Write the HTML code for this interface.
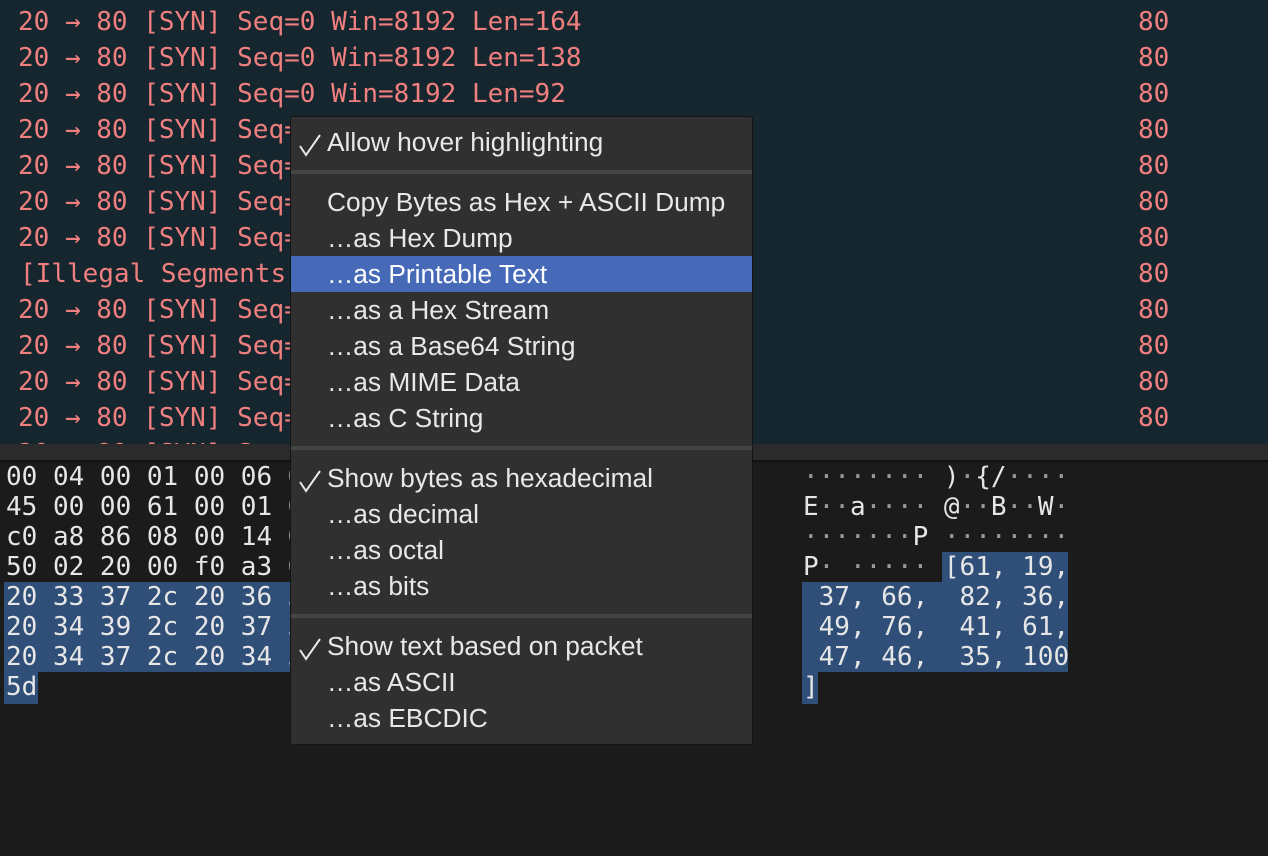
<!DOCTYPE html>
<html><head><meta charset="utf-8"><style>
body{margin:0;width:1268px;height:856px;overflow:hidden;background:#1b1b1b;position:relative;font-family:"DejaVu Sans Mono","Liberation Mono",monospace;}
.top{position:absolute;left:0;top:0;width:1268px;height:444px;background:#16262e;overflow:hidden}
.r{position:absolute;left:18px;font-size:26px;line-height:36px;height:36px;color:#f07f7f;white-space:pre}
.n{position:absolute;left:1138px;font-size:26px;line-height:36px;color:#f07f7f}
.bar{position:absolute;left:0;top:444px;width:1268px;height:16px;background:#2b2b2b;border-bottom:2px solid #111}
.h{position:absolute;font-size:26px;line-height:30px;color:#e6e6e6;white-space:pre}
.sel{position:absolute;background:#2f4e78}
.menu{position:absolute;left:290px;top:116px;width:461px;height:627px;background:#303030;border:1px solid #141414;border-radius:3px;font-family:"Liberation Sans",sans-serif;color:#e8e8e8;font-size:26.3px}
.mi{position:absolute;left:0;width:461px;height:36px;line-height:36px;padding-left:36px;box-sizing:border-box;white-space:pre}
.ck{position:absolute;left:7px;top:9px;width:24px;height:24px}
.sep{position:absolute;left:0;width:461px;height:4px;background:#454545}
.hl{background:#4669b8;color:#fff}
.d{color:#9a9a9a}
</style></head><body>
<div class="top">
<div class="r" style="top:4px">20 → 80 [SYN] Seq=0 Win=8192 Len=164</div>
<div class="r" style="top:40px">20 → 80 [SYN] Seq=0 Win=8192 Len=138</div>
<div class="r" style="top:76px">20 → 80 [SYN] Seq=0 Win=8192 Len=92</div>
<div class="r" style="top:112px">20 → 80 [SYN] Seq=</div>
<div class="r" style="top:148px">20 → 80 [SYN] Seq=</div>
<div class="r" style="top:184px">20 → 80 [SYN] Seq=</div>
<div class="r" style="top:220px">20 → 80 [SYN] Seq=</div>
<div class="r" style="top:256px;left:20px">[Illegal Segments]</div>
<div class="r" style="top:292px">20 → 80 [SYN] Seq=</div>
<div class="r" style="top:328px">20 → 80 [SYN] Seq=</div>
<div class="r" style="top:364px">20 → 80 [SYN] Seq=</div>
<div class="r" style="top:400px">20 → 80 [SYN] Seq=</div>
<div class="r" style="top:436px">20 → 80 [SYN] Seq=</div>
<div class="n" style="top:4px">80</div><div class="n" style="top:40px">80</div><div class="n" style="top:76px">80</div><div class="n" style="top:112px">80</div><div class="n" style="top:148px">80</div><div class="n" style="top:184px">80</div><div class="n" style="top:220px">80</div><div class="n" style="top:256px">80</div><div class="n" style="top:292px">80</div><div class="n" style="top:328px">80</div><div class="n" style="top:364px">80</div><div class="n" style="top:400px">80</div>
</div>
<div class="bar"></div>
<div class="sel" style="left:4px;top:582px;width:290px;height:90px"></div>
<div class="sel" style="left:4px;top:672px;width:34px;height:32px"></div>
<div class="sel" style="left:942px;top:552px;width:126px;height:30px"></div>
<div class="sel" style="left:802px;top:582px;width:266px;height:90px"></div>
<div class="sel" style="left:802px;top:672px;width:16px;height:32px"></div>
<div class="h" style="left:6px;top:462px">00 04 00 01 00 06 0</div>
<div class="h" style="left:6px;top:492px">45 00 00 61 00 01 0</div>
<div class="h" style="left:6px;top:522px">c0 a8 86 08 00 14 0</div>
<div class="h" style="left:6px;top:552px">50 02 20 00 f0 a3 0</div>
<div class="h" style="left:6px;top:582px">20 33 37 2c 20 36 3</div>
<div class="h" style="left:6px;top:612px">20 34 39 2c 20 37 3</div>
<div class="h" style="left:6px;top:642px">20 34 37 2c 20 34 3</div>
<div class="h" style="left:6px;top:672px">5d</div>
<div class="h" style="left:803px;top:462px"><span class="d">········</span> )<span class="d">·</span>{/<span class="d">····</span></div>
<div class="h" style="left:803px;top:492px">E<span class="d">··</span>a<span class="d">····</span> @<span class="d">··</span>B<span class="d">··</span>W<span class="d">·</span></div>
<div class="h" style="left:803px;top:522px"><span class="d">·······</span>P <span class="d">········</span></div>
<div class="h" style="left:803px;top:552px">P<span class="d">·</span> <span class="d">·····</span> [61, 19,</div>
<div class="h" style="left:803px;top:582px"> 37, 66,  82, 36,</div>
<div class="h" style="left:803px;top:612px"> 49, 76,  41, 61,</div>
<div class="h" style="left:803px;top:642px"> 47, 46,  35, 100</div>
<div class="h" style="left:803px;top:672px">]</div>
<div class="menu">
<div class="mi" style="top:7px"><svg class="ck" viewBox="0 0 24 24"><path d="M2 13 L8 22 L22 2" fill="none" stroke="#e8e8e8" stroke-width="2"/></svg>Allow hover highlighting</div>
<div class="sep" style="top:53px"></div>
<div class="mi" style="top:67px">Copy Bytes as Hex + ASCII Dump</div>
<div class="mi" style="top:103px">…as Hex Dump</div>
<div class="mi hl" style="top:139px">…as Printable Text</div>
<div class="mi" style="top:175px">…as a Hex Stream</div>
<div class="mi" style="top:211px">…as a Base64 String</div>
<div class="mi" style="top:247px">…as MIME Data</div>
<div class="mi" style="top:283px">…as C String</div>
<div class="sep" style="top:329px"></div>
<div class="mi" style="top:343px"><svg class="ck" viewBox="0 0 24 24"><path d="M2 13 L8 22 L22 2" fill="none" stroke="#e8e8e8" stroke-width="2"/></svg>Show bytes as hexadecimal</div>
<div class="mi" style="top:379px">…as decimal</div>
<div class="mi" style="top:415px">…as octal</div>
<div class="mi" style="top:451px">…as bits</div>
<div class="sep" style="top:497px"></div>
<div class="mi" style="top:511px"><svg class="ck" viewBox="0 0 24 24"><path d="M2 13 L8 22 L22 2" fill="none" stroke="#e8e8e8" stroke-width="2"/></svg>Show text based on packet</div>
<div class="mi" style="top:547px">…as ASCII</div>
<div class="mi" style="top:583px">…as EBCDIC</div>
</div>
</body></html>
